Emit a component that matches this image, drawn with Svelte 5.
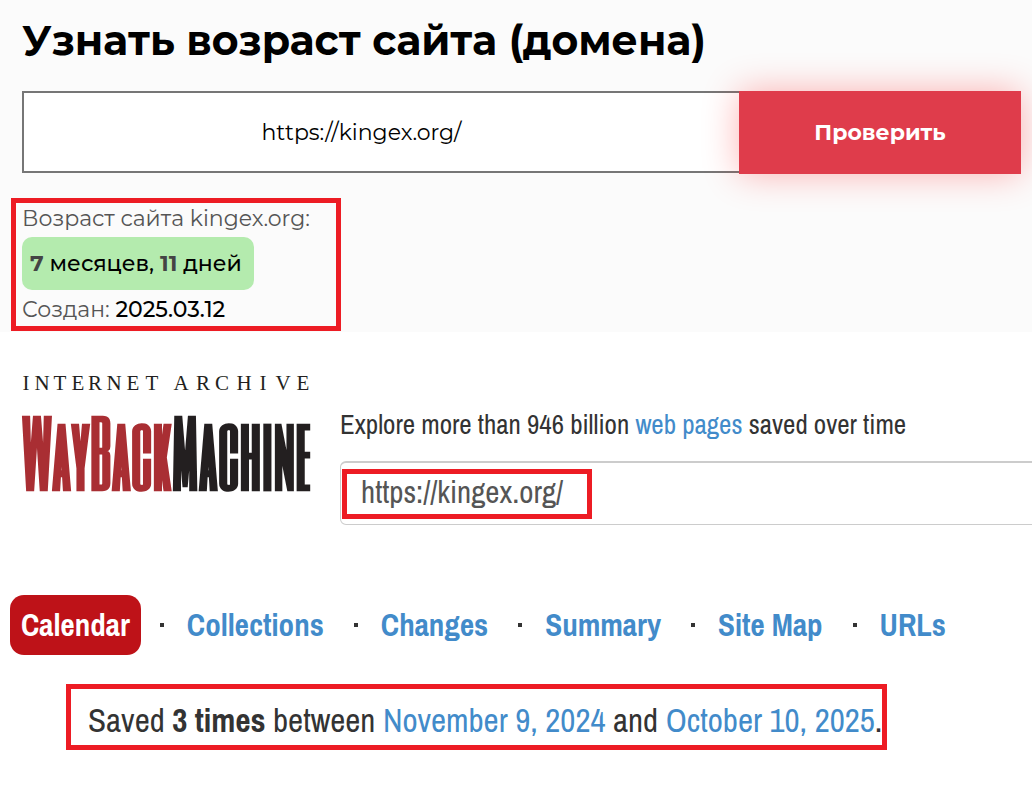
<script lang="ts">
	let domain = 'https://kingex.org/';
	let archived = 'https://kingex.org/';

	const tabs = ['Calendar', 'Collections', 'Changes', 'Summary', 'Site Map', 'URLs'];

	// centre of each letter above the wordmark
	const letters: [string, number][] = [
		['I', 4], ['N', 20], ['T', 38], ['E', 56], ['R', 73], ['N', 92], ['E', 111], ['T', 130],
		['A', 159], ['R', 181], ['C', 200], ['H', 222], ['I', 241], ['V', 261], ['E', 281]
	];
</script>

<section class="age">
	<h1>Узнать возраст сайта (домена)</h1>

	<form on:submit|preventDefault>
		<input type="text" aria-label="Домен" bind:value={domain} />
		<button type="submit">Проверить</button>
	</form>

	<div class="result marked">
		<p>Возраст сайта kingex.org:</p>
		<p class="badge"><b>7</b> месяцев, <b>11</b> дней</p>
		<p>Создан: <span>2025.03.12</span></p>
	</div>
</section>

<section class="archive">
	<header>
		<a class="logo" href="/" aria-label="Internet Archive Wayback Machine">
			<svg viewBox="0 0 288 130">
				<text class="small" y="22">
					{#each letters as [letter, x]}<tspan {x}>{letter}</tspan>{/each}
				</text>
				<text class="big" x="0" y="122"><tspan class="red">WayBack</tspan>Machine</text>
			</svg>
		</a>

		<div class="search">
			<p>Explore more than 946 billion <a href="/web">web pages</a> saved over time</p>
			<div class="field">
				<input type="text" aria-label="URL" bind:value={archived} />
				<div class="frame marked"></div>
			</div>
		</div>
	</header>

	<nav>
		{#each tabs as tab, i}
			{#if i > 0}<i class="dot"></i>{/if}
			<a href="#{tab}" class:active={i === 0}>{tab}</a>
		{/each}
	</nav>

	<p class="saved marked">
		Saved <b>3 times</b> between <a href="#first">November 9, 2024</a> and <a href="#last">October 10, 2025</a>.
	</p>
</section>

<style>
	:global(body) {
		margin: 0;
		background: #fff;
	}

	h1,
	p {
		margin: 0;
	}

	a {
		color: #428bca;
		text-decoration: none;
	}

	.marked {
		border: 5px solid #ed1c24;
	}

	.age {
		background: #fbfbfb;
		font-family: Montserrat, Inter, sans-serif;
		font-size: 22px;
		padding: 15px 11px 1px;
		overflow: hidden;
	}

	h1 {
		font-size: 41px;
		line-height: 50px;
		padding-left: 11px;
	}

	form {
		display: flex;
		margin: 26px 0 24px 11px;
	}

	form input {
		flex: 1;
		min-width: 0;
		box-sizing: border-box;
		height: 82px;
		border: 2px solid #767676;
		border-right: 0;
		padding: 0 40px 0 0;
		background: #fff;
		color: #000;
		font: inherit;
		text-align: center;
	}

	button {
		width: 282px;
		height: 83px;
		border: 0;
		background: #df3c4b;
		box-shadow: 0 0 36px rgba(255, 0, 0, 0.3);
		color: #fff;
		font: inherit;
		font-weight: 700;
	}

	.result {
		display: flex;
		flex-direction: column;
		gap: 2px;
		box-sizing: border-box;
		width: 330px;
		padding: 0 6px;
		color: #555;
		line-height: 32px;
	}

	.result span {
		color: #000;
		font-weight: 500;
	}

	.result .badge {
		width: fit-content;
		margin-bottom: 2px;
		padding: 0 12px 0 8px;
		border-radius: 10px;
		background: #b4ebae;
		color: #000;
		font-weight: 500;
		line-height: 53px;
	}

	.badge b {
		color: #444;
	}

	.archive {
		color: #333;
		font-family: 'Archivo Narrow', 'Liberation Sans', sans-serif;
		overflow: hidden;
	}

	header {
		display: flex;
		gap: 30px;
		padding: 36px 0 0 22px;
	}

	.logo {
		flex: 0 0 288px;
	}

	svg {
		display: block;
		width: 100%;
		overflow: visible;
		fill: #231f20;
	}

	.small {
		font-family: 'Liberation Serif', serif;
		font-size: 21px;
		text-anchor: middle;
	}

	.big {
		font-family: 'Six Caps', 'League Gothic', sans-serif;
		font-size: 87px;
		font-weight: 700;
	}

	.red {
		fill: #a92e33;
	}

	.search {
		flex: 1;
		min-width: 0;
		padding-top: 40px;
		font-size: 27px;
		line-height: 32px;
	}

	.field {
		position: relative;
		margin: 21px -8px 0 0;
	}

	.field input {
		display: block;
		box-sizing: border-box;
		width: 100%;
		height: 64px;
		border: 1px solid #ccc;
		border-top-width: 2px;
		border-radius: 6px;
		padding: 0 20px 4px;
		background: #fff;
		color: #555;
		font: inherit;
		font-size: 31px;
	}

	.frame {
		position: absolute;
		top: 8px;
		left: 2px;
		width: 240px;
		height: 40px;
		pointer-events: none;
	}

	nav {
		display: flex;
		align-items: center;
		padding: 70px 10px 0;
		font-size: 31px;
		font-weight: 700;
		line-height: 60px;
		white-space: nowrap;
	}

	nav a {
		padding: 0 11px;
	}

	.active {
		border-radius: 14px;
		background: #be1218;
		color: #fff;
	}

	.dot {
		width: 4px;
		height: 4px;
		margin: 0 12px 0 19px;
		background: #333;
	}

	.saved {
		width: fit-content;
		margin: 29px 0 0 66px;
		padding: 6px 0 0 17px;
		font-size: 33px;
		line-height: 50px;
	}
</style>
